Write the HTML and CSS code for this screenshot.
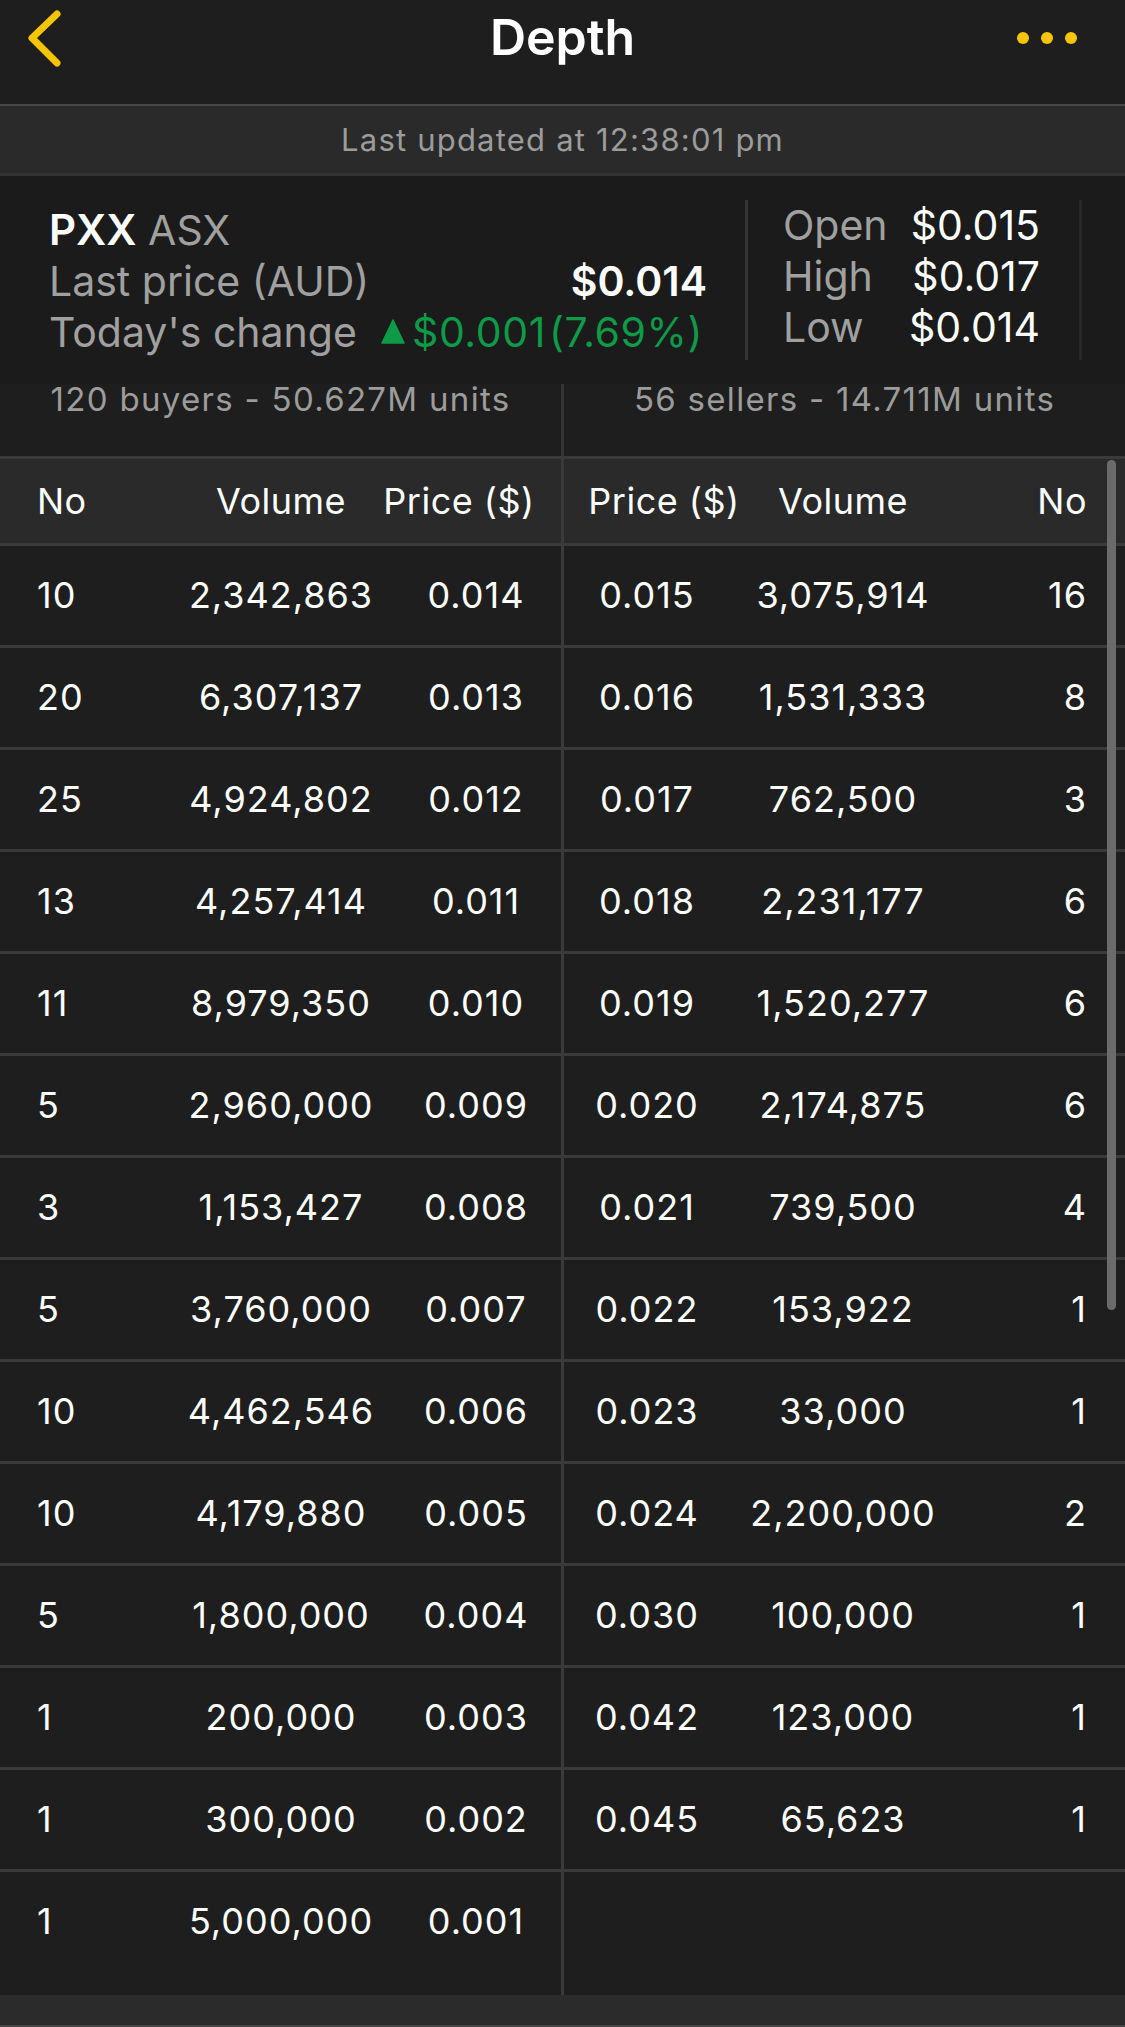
FILE: index.html
```html
<!DOCTYPE html>
<html lang="en">
<head>
    <meta charset="UTF-8">
    <meta name="viewport" content="width=device-width, initial-scale=1.0">
    <title>Depth</title>
    <link rel="stylesheet" href="styles.css">
</head>
<body>
    <div class="nav">
        <div class="nav-bar">
            <div class="nav-left">
                <svg class="back" width="50" height="60" viewBox="0 0 50 60"><path d="M37 6 L12 30 L37 55" fill="none" stroke="#f6c500" stroke-width="7" stroke-linecap="round" stroke-linejoin="round"/></svg>
            </div>
            <div class="title">Depth</div>
            <div class="nav-right">
                <svg width="62" height="14" viewBox="0 0 62 14"><circle cx="6" cy="7" r="6" fill="#f6c500"/><circle cx="30" cy="7" r="6" fill="#f6c500"/><circle cx="54" cy="7" r="6" fill="#f6c500"/></svg>
            </div>
        </div>
    </div>
    <div class="updated">Last updated at 12:38:01 pm</div>

    <div class="quote">
        <div class="quote-main">
            <div class="q-line"><span><b class="sym">PXX</b> <span class="muted">ASX</span></span></div>
            <div class="q-line"><span class="muted">Last price (AUD)</span><b>$0.014</b></div>
            <div class="q-line"><span class="muted">Today's change</span>
                <span class="up"><svg class="tri" width="24" height="25" viewBox="0 0 24 25"><path d="M12 1 L23 24 L1 24 Z" fill="#0e9a48" stroke="#0e9a48" stroke-width="1.5" stroke-linejoin="round"/></svg>$0.001<span class="pct">(7.69%)</span></span>
            </div>
        </div>
        <div class="divider"></div>
        <div class="quote-side">
            <div class="q-row"><span class="muted">Open</span><span>$0.015</span></div>
            <div class="q-row"><span class="muted">High</span><span>$0.017</span></div>
            <div class="q-row"><span class="muted">Low</span><span>$0.014</span></div>
        </div>
        <div class="divider faint"></div>
    </div>

    <div class="summary">
        <div class="half bid-half">120 buyers - 50.627M units</div>
        <div class="half">56 sellers - 14.711M units</div>
    </div>

    <div class="book">
        <div class="row head">
            <div class="bid"><span>No</span><span class="c">Volume</span><span class="c price-h">Price ($)</span></div>
            <div class="ask"><span class="c price-h">Price ($)</span><span class="c">Volume</span><span class="r">No</span></div>
        </div>
        <div class="row">
            <div class="bid"><span>10</span><span class="c">2,342,863</span><span class="c">0.014</span></div>
            <div class="ask"><span class="c">0.015</span><span class="c">3,075,914</span><span class="r">16</span></div>
        </div>
        <div class="row">
            <div class="bid"><span>20</span><span class="c">6,307,137</span><span class="c">0.013</span></div>
            <div class="ask"><span class="c">0.016</span><span class="c">1,531,333</span><span class="r">8</span></div>
        </div>
        <div class="row">
            <div class="bid"><span>25</span><span class="c">4,924,802</span><span class="c">0.012</span></div>
            <div class="ask"><span class="c">0.017</span><span class="c">762,500</span><span class="r">3</span></div>
        </div>
        <div class="row">
            <div class="bid"><span>13</span><span class="c">4,257,414</span><span class="c">0.011</span></div>
            <div class="ask"><span class="c">0.018</span><span class="c">2,231,177</span><span class="r">6</span></div>
        </div>
        <div class="row">
            <div class="bid"><span>11</span><span class="c">8,979,350</span><span class="c">0.010</span></div>
            <div class="ask"><span class="c">0.019</span><span class="c">1,520,277</span><span class="r">6</span></div>
        </div>
        <div class="row">
            <div class="bid"><span>5</span><span class="c">2,960,000</span><span class="c">0.009</span></div>
            <div class="ask"><span class="c">0.020</span><span class="c">2,174,875</span><span class="r">6</span></div>
        </div>
        <div class="row">
            <div class="bid"><span>3</span><span class="c">1,153,427</span><span class="c">0.008</span></div>
            <div class="ask"><span class="c">0.021</span><span class="c">739,500</span><span class="r">4</span></div>
        </div>
        <div class="row">
            <div class="bid"><span>5</span><span class="c">3,760,000</span><span class="c">0.007</span></div>
            <div class="ask"><span class="c">0.022</span><span class="c">153,922</span><span class="r">1</span></div>
        </div>
        <div class="row">
            <div class="bid"><span>10</span><span class="c">4,462,546</span><span class="c">0.006</span></div>
            <div class="ask"><span class="c">0.023</span><span class="c">33,000</span><span class="r">1</span></div>
        </div>
        <div class="row">
            <div class="bid"><span>10</span><span class="c">4,179,880</span><span class="c">0.005</span></div>
            <div class="ask"><span class="c">0.024</span><span class="c">2,200,000</span><span class="r">2</span></div>
        </div>
        <div class="row">
            <div class="bid"><span>5</span><span class="c">1,800,000</span><span class="c">0.004</span></div>
            <div class="ask"><span class="c">0.030</span><span class="c">100,000</span><span class="r">1</span></div>
        </div>
        <div class="row">
            <div class="bid"><span>1</span><span class="c">200,000</span><span class="c">0.003</span></div>
            <div class="ask"><span class="c">0.042</span><span class="c">123,000</span><span class="r">1</span></div>
        </div>
        <div class="row">
            <div class="bid"><span>1</span><span class="c">300,000</span><span class="c">0.002</span></div>
            <div class="ask"><span class="c">0.045</span><span class="c">65,623</span><span class="r">1</span></div>
        </div>
        <div class="row last">
            <div class="bid"><span>1</span><span class="c">5,000,000</span><span class="c">0.001</span></div>
            <div class="ask"></div>
        </div>
        <div class="scrollbar"></div>
    </div>
    <div class="footer"></div>
</body>
</html>
```

FILE: styles.css
```css
body {
    margin: 0;
    width: 1125px;
    height: 2027px;
    overflow: hidden;
    background-color: #1e1e1e;
    color: #fff;
    font-family: Inter, "Noto Sans", sans-serif;
}
.nav {
    height: 104px;
}
.nav-bar {
    height: 75px;
    display: grid;
    grid-template-columns: 1fr auto 1fr;
    align-items: center;
}
.nav-left {
    padding-left: 20px;
    display: flex;
}
.nav-right {
    display: flex;
    justify-content: flex-end;
    padding-right: 46px;
}
.title {
    font-size: 50px;
    font-weight: 600;
    line-height: 75px;
}
.updated {
    height: 67px;
    line-height: 67px;
    border-top: 2px solid #464646;
    border-bottom: 3px solid #333;
    background-color: #2a2a2a;
    color: #9c9c9c;
    font-size: 31px;
    letter-spacing: 1.2px;
    text-align: center;
}
.quote {
    height: 208px;
    display: flex;
    background-color: #1b1b1b;
}
.quote-main {
    width: 658px;
    margin-left: 49px;
    padding-top: 28px;
}
.q-line {
    display: flex;
    justify-content: space-between;
    align-items: center;
    height: 51px;
    font-size: 41px;
}
.q-line b {
    font-weight: 600;
}
.sym {
    font-size: 42px;
    font-weight: 700;
}
.muted {
    color: #a0a0a0;
}
.up {
    display: flex;
    align-items: center;
    color: #0e9a48;
    margin-right: 4px;
    letter-spacing: 0.6px;
}
.tri {
    margin-right: 7px;
}
.pct {
    margin-left: 3px;
}
.divider {
    width: 3px;
    margin: 24px 0 24px 38px;
    background-color: #333;
}
.divider.faint {
    margin-left: 39px;
    background-color: #272727;
}
.quote-side {
    width: 257px;
    margin-left: 35px;
    padding-top: 23px;
}
.q-row {
    display: flex;
    justify-content: space-between;
    align-items: center;
    height: 51px;
    font-size: 41px;
}
.summary {
    height: 72px;
    display: flex;
}
.half {
    width: 561px;
    line-height: 30px;
    text-align: center;
    color: #9c9c9c;
    font-size: 33px;
    letter-spacing: 1.3px;
}
.bid-half {
    border-right: 3px solid #333;
}
.book {
    border-top: 3px solid #3a3a3a;
    font-size: 36px;
    letter-spacing: 1px;
    white-space: nowrap;
}
.row {
    display: flex;
    border-bottom: 3px solid #3a3a3a;
    line-height: 99px;
}
.row.head {
    line-height: 84px;
    background-color: #2a2a2a;
    letter-spacing: 0.5px;
}
.row.last {
    height: 123px;
    border-bottom: none;
}
.bid {
    width: 524px;
    padding-left: 37px;
    display: grid;
    grid-template-columns: 110px 268px 122px;
    align-content: start;
    border-right: 3px solid #3a3a3a;
}
.ask {
    width: 523px;
    padding-right: 38px;
    display: grid;
    grid-template-columns: 166px 226px 131px;
    align-content: start;
}
.c {
    text-align: center;
}
.r {
    text-align: right;
}
.bid .price-h {
    margin-left: -36px;
    margin-right: -2px;
}
.ask .price-h {
    margin-left: 17px;
    margin-right: -17px;
}
.scrollbar {
    position: absolute;
    left: 1107px;
    top: 460px;
    width: 9px;
    height: 850px;
    border-radius: 5px;
    background-color: #6b6b6b;
}
.footer {
    height: 30px;
    background-color: #2b2b2b;
    border-bottom: 2px solid #464646;
}
```
